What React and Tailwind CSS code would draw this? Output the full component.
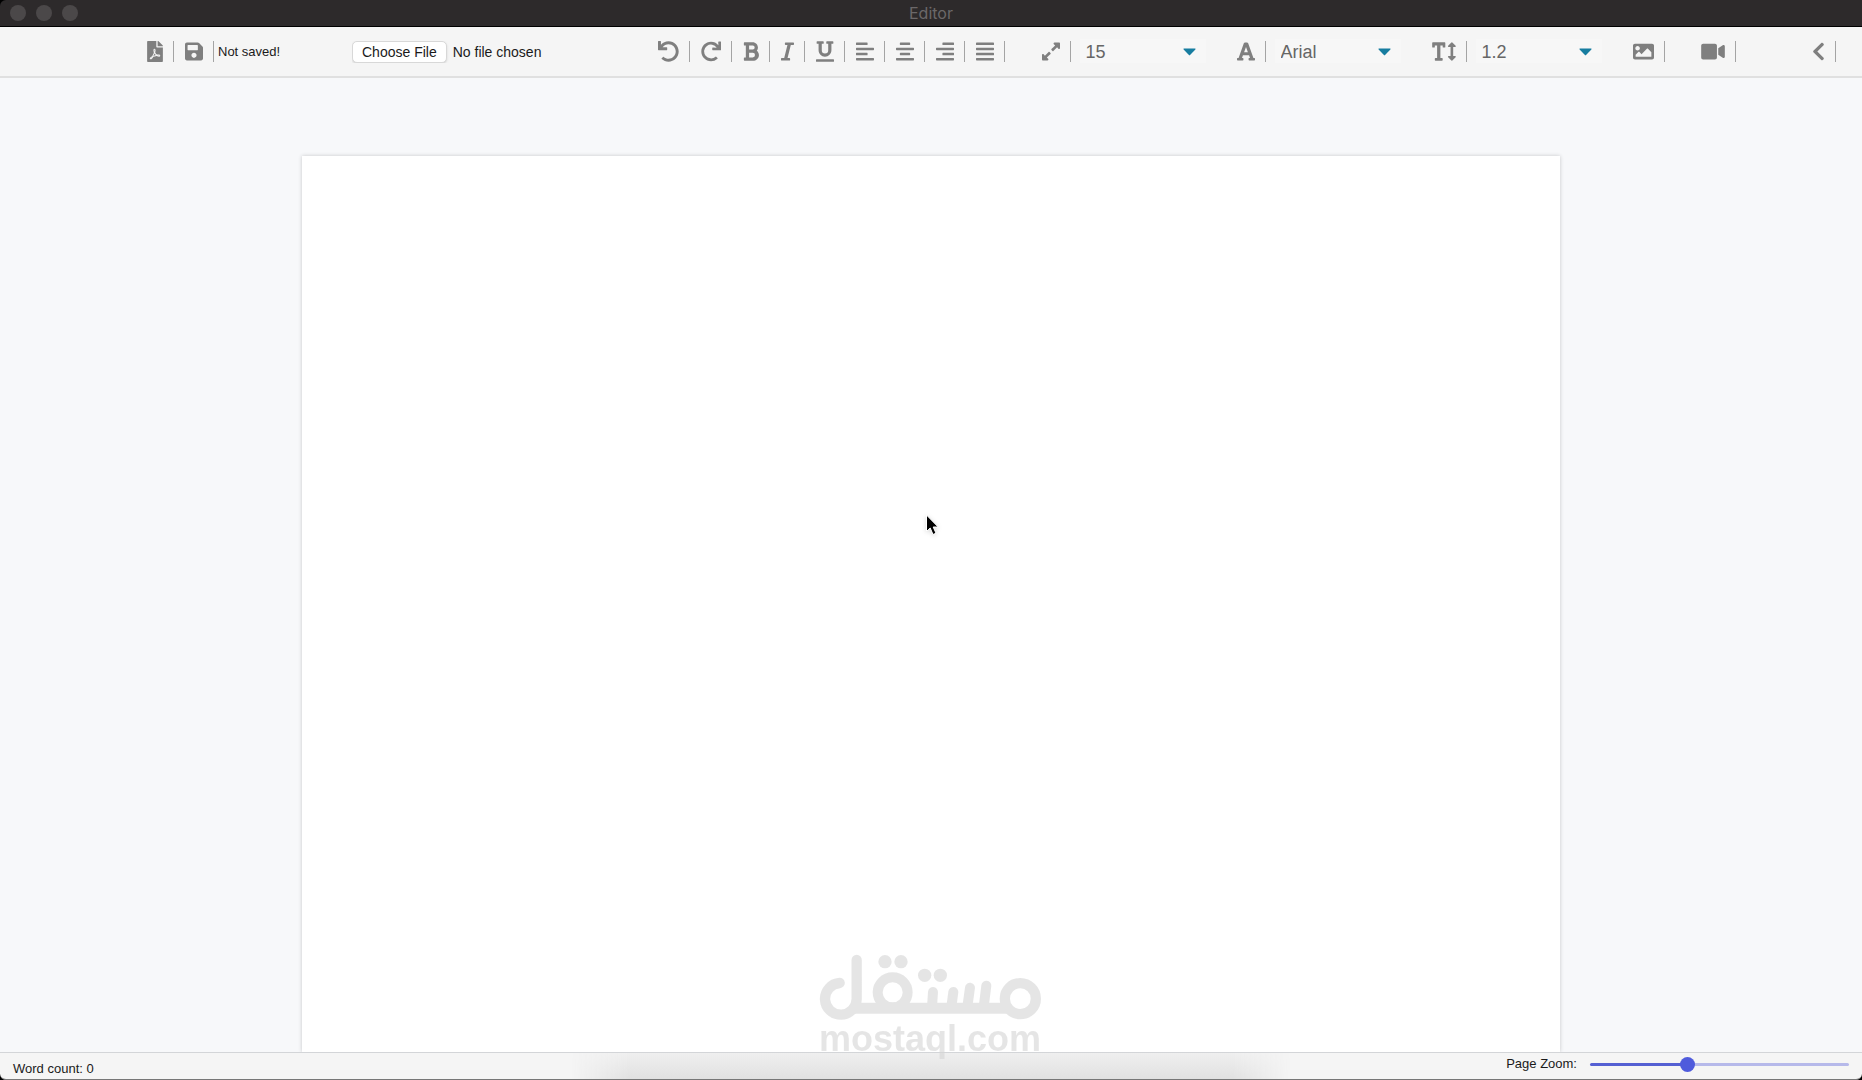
import { useState } from "react";
import {
  FaFilePdf,
  FaSave,
  FaUndo,
  FaRedo,
  FaBold,
  FaItalic,
  FaUnderline,
  FaAlignLeft,
  FaAlignCenter,
  FaAlignRight,
  FaAlignJustify,
  FaExpandAlt,
  FaFont,
  FaTextHeight,
  FaImage,
  FaVideo,
  FaChevronLeft,
} from "react-icons/fa";

function Tool({ icon: Icon, label, size = "w-[18px]" }) {
  return (
    <button
      type="button"
      aria-label={label}
      title={label}
      className="box-content h-[21px] shrink-0 border-r border-[#a4a4a4] pr-[10px] pl-[11px] text-[#7f7f7f]"
    >
      <Icon className={`h-[21px] ${size}`} />
    </button>
  );
}

function Picker({ icon: Icon, label, size, options }) {
  return (
    <label className="flex shrink-0 items-center">
      <span className="box-content h-[21px] border-r border-[#a4a4a4] pr-[10px] text-[#7f7f7f]">
        <Icon className={`h-[21px] ${size}`} aria-hidden="true" />
      </span>
      <span className="relative ml-[9px] w-[126px]">
        <select
          aria-label={label}
          className="h-[24px] w-full appearance-none bg-[#f7f7f7] pt-[2px] pl-[6px] text-[18px] leading-[22px] text-[#666666] outline-none"
        >
          {options.map((o) => (
            <option key={o}>{o}</option>
          ))}
        </select>
        <svg
          viewBox="0 0 13 8"
          className="pointer-events-none absolute top-[9px] right-[10px] h-[8px] w-[13px] fill-[#177da0]"
          aria-hidden="true"
        >
          <path d="M1 0.5h11q1 0 .4.9L7.3 6.8q-.8 1-1.6 0L.6 1.4Q0 .5 1 .5z" />
        </svg>
      </span>
    </label>
  );
}

function TitleBar() {
  return (
    <header className="relative flex h-[27px] shrink-0 items-center justify-center rounded-tl-[6px] border-b border-black bg-[#2d2a2b]">
      <div className="absolute left-[10px] flex gap-[10px]">
        <button type="button" aria-label="Close" className="size-[16px] rounded-full bg-[#4b4849]" />
        <button type="button" aria-label="Minimize" className="size-[16px] rounded-full bg-[#4b4849]" />
        <button type="button" aria-label="Full screen" className="size-[16px] rounded-full bg-[#4b4849]" />
      </div>
      <h1 className="font-['Inter',sans-serif] text-[16px] leading-[20px] text-[#6b6869]">Editor</h1>
    </header>
  );
}

function Toolbar() {
  return (
    <div
      role="toolbar"
      aria-label="Formatting"
      className="flex h-[51px] shrink-0 items-center justify-between border-b-2 border-[#e0e0e0] bg-[#f5f5f5] pr-[26px] pl-[136px]"
    >
      <div className="flex items-center">
        <Tool icon={FaFilePdf} label="Export PDF" size="w-[16px]" />
        <Tool icon={FaSave} label="Save" />
        <span className="ml-[4px] w-[134px] text-[13px] leading-[20px] whitespace-nowrap text-[#1a1a1a]">
          Not saved!
        </span>
        <input
          type="file"
          aria-label="Open document"
          className="w-[229px] text-[14px] leading-[20px] text-[#1a1a1a] file:mr-[6px] file:h-[22px] file:rounded-[5px] file:border file:border-[#d8d8d8] file:bg-white file:px-[9px] file:text-[14px] file:leading-[20px] file:text-[#1a1a1a] file:shadow-sm"
        />
      </div>
      <div className="flex items-center">
        <Tool icon={FaUndo} label="Undo" size="w-[21px]" />
        <Tool icon={FaRedo} label="Redo" size="w-[20px]" />
        <Tool icon={FaBold} label="Bold" size="w-[16px]" />
        <Tool icon={FaItalic} label="Italic" size="w-[13px]" />
        <Tool icon={FaUnderline} label="Underline" />
        <Tool icon={FaAlignLeft} label="Align left" />
        <Tool icon={FaAlignCenter} label="Align center" />
        <Tool icon={FaAlignRight} label="Align right" />
        <Tool icon={FaAlignJustify} label="Justify" />
        <div className="mr-[20px] ml-[37px] flex items-center gap-[31px]">
          <Picker icon={FaExpandAlt} label="Font size" size="w-[18px]" options={["15", "16", "18", "24"]} />
          <Picker icon={FaFont} label="Font family" size="w-[18px]" options={["Arial", "Georgia", "Verdana"]} />
          <Picker icon={FaTextHeight} label="Line height" size="w-[24px]" options={["1.2", "1.5", "2.0"]} />
        </div>
        <div className="flex items-center gap-[25px]">
          <Tool icon={FaImage} label="Insert image" size="w-[21px]" />
          <Tool icon={FaVideo} label="Insert video" size="w-[24px]" />
        </div>
      </div>
      <Tool icon={FaChevronLeft} label="Collapse" size="w-[13px]" />
    </div>
  );
}

function StatusBar() {
  const [zoom, setZoom] = useState(37);
  return (
    <footer className="relative flex h-[28px] shrink-0 items-start justify-between rounded-b-[6px] border-t border-b border-t-[#d3d5d8] border-b-[#777777] bg-[#f5f5f5] px-[13px] text-[13px] leading-[16px] text-[#1a1a1a]">
      <div
        aria-hidden="true"
        className="absolute inset-0 mx-auto w-[720px] bg-linear-to-b from-[#efefef] to-[#e1e1e1] mask-x-from-92% mask-x-to-100%"
      />
      <p className="mt-[8px]">Word count: 0</p>
      <label className="mt-[3px] flex items-center gap-[13px]">
        Page Zoom:
        <input
          type="range"
          min="0"
          max="100"
          value={zoom}
          onChange={(e) => setZoom(Number(e.target.value))}
          style={{ "--fill": `${zoom}%` }}
          className="h-[16px] w-[259px] appearance-none bg-transparent [&::-webkit-slider-runnable-track]:h-[3px] [&::-webkit-slider-runnable-track]:rounded-full [&::-webkit-slider-runnable-track]:bg-[linear-gradient(to_right,#5560d3_var(--fill),#b6b9ea_var(--fill))] [&::-webkit-slider-thumb]:-mt-[6px] [&::-webkit-slider-thumb]:size-[15px] [&::-webkit-slider-thumb]:appearance-none [&::-webkit-slider-thumb]:rounded-full [&::-webkit-slider-thumb]:bg-[#4f5bdc]"
        />
      </label>
    </footer>
  );
}

function Watermark() {
  return (
    <div className="pointer-events-none absolute inset-x-0 bottom-[23px] flex flex-col items-center pr-[2px] text-[#d5d5d5] opacity-60">
      <svg viewBox="82 70 678 204" className="h-[68px] w-[226px]" fill="none" stroke="currentColor" role="img" aria-label="Logo">
        <path d="M201 91V207A47.5 47.5 0 1 1 150 160" strokeWidth="31" strokeLinecap="round" />
        <path d="M190 235.500H655" strokeWidth="33" />
        <circle cx="309" cy="188" r="45" strokeWidth="30" />
        <circle cx="692" cy="207" r="46.500" strokeWidth="31" />
        <g strokeWidth="30" strokeLinecap="round">
          <path d="M430 187L427 232M491 187L485 232M541 174L533 232M590 168L582 232" />
        </g>
        <g fill="currentColor" stroke="none">
          <circle cx="286" cy="96" r="20" />
          <circle cx="334" cy="96" r="20" />
          <circle cx="405" cy="137" r="20" />
          <circle cx="452" cy="137" r="20" />
        </g>
      </svg>
      <span className="text-[36px] leading-[36px] font-bold">mostaql.com</span>
    </div>
  );
}

export default function App() {
  return (
    <div className="relative flex h-screen flex-col overflow-hidden bg-black font-['Liberation_Sans',sans-serif]">
      <TitleBar />
      <Toolbar />
      <main className="flex flex-1 justify-center overflow-hidden bg-[#f7f8fa] pt-[78px]">
        <div
          role="textbox"
          aria-label="Document"
          aria-multiline="true"
          contentEditable
          suppressContentEditableWarning
          className="w-full max-w-[1258px] bg-white shadow-[0_0_4px_rgba(0,0,0,0.2)] outline-none"
        />
      </main>
      <StatusBar />
      <Watermark />
      <svg
        viewBox="0 0 16 24"
        className="pointer-events-none absolute top-[514px] left-1/2 -ml-[6px] h-[24px] w-[16px] drop-shadow-sm"
        aria-hidden="true"
      >
        <path d="M1.500 1v16.500l3.700-3.500 2.800 6.500 3-1.300-2.800-6.200h5z" fill="#000" stroke="#fff" strokeWidth="1" />
      </svg>
    </div>
  );
}
